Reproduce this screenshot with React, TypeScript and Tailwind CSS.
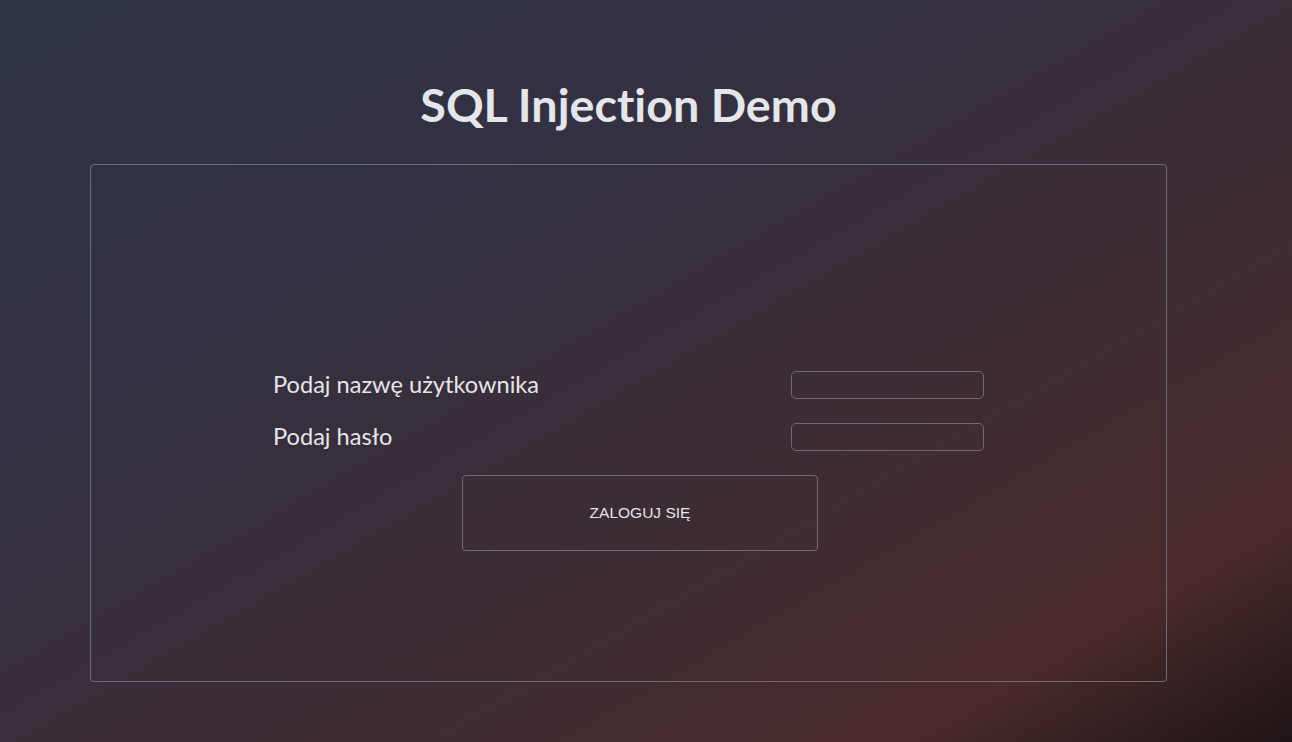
export default function App() {
  return (
    <div
      className="min-h-screen w-full bg-[linear-gradient(150deg,#2e3346_0%,#333142_30%,#3c2c34_60%,#4a2a2b_85%,#1e1416_100%)] font-['Lato',sans-serif] [font-variant-ligatures:none]"
    >
      <div className="pt-[76px] pb-[60px]">
        <h1 className="ml-[90px] w-[1077px] text-center text-[46.7px] font-bold leading-[56px] text-[#e4e6ea]">
          SQL Injection Demo
        </h1>

        <div className="ml-[90px] mt-[32px] flex h-[518px] w-[1077px] flex-col items-center rounded-[4px] border border-[#6b6d78] pt-[206px]">
          <form className="flex w-[711px] flex-col" onSubmit={(e) => e.preventDefault()}>
            <div className="flex h-[28px] items-center justify-between">
              <label className="text-[23.6px] text-[#e6e6ea]">Podaj nazwę użytkownika</label>
              <input
                type="text"
                className="h-[28px] w-[193px] rounded-[5px] border border-[#6e6a72] bg-transparent outline-none"
              />
            </div>
            <div className="mt-[24px] flex h-[28px] items-center justify-between">
              <label className="text-[23.6px] text-[#e6e6ea]">Podaj hasło</label>
              <input
                type="password"
                className="h-[28px] w-[193px] rounded-[5px] border border-[#6e6a72] bg-transparent outline-none"
              />
            </div>
            <button
              type="submit"
              className="ml-[189px] mt-[24px] h-[76px] w-[356px] rounded-[4px] border border-[#716c74] bg-transparent font-['Liberation_Sans',sans-serif] text-[15.5px] text-[#e4e4e8]"
            >
              ZALOGUJ SIĘ
            </button>
          </form>
        </div>
      </div>
    </div>
  );
}
